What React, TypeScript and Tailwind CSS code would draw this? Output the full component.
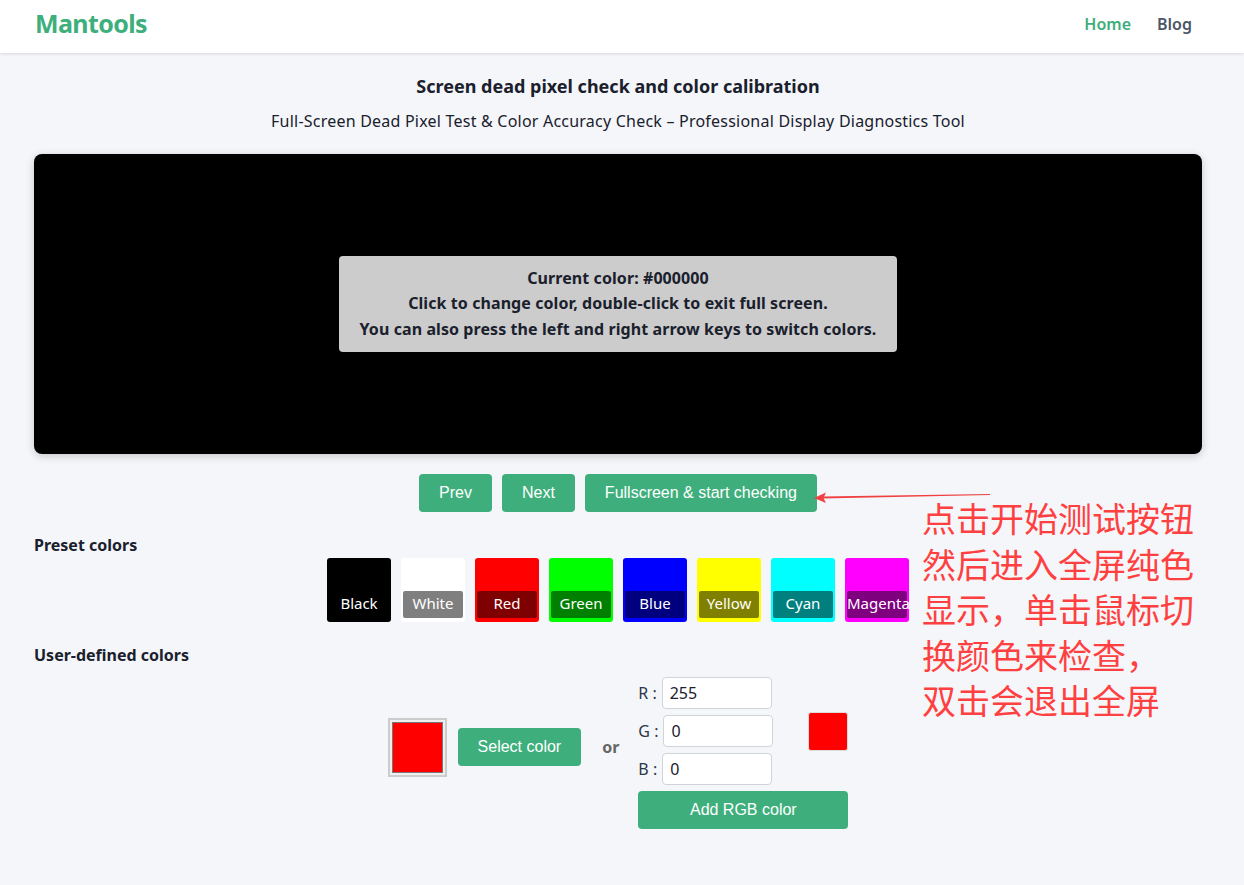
import { useState } from "react";

const PRESETS = [
  { name: "Black", hex: "#000000" },
  { name: "White", hex: "#ffffff" },
  { name: "Red", hex: "#ff0000" },
  { name: "Green", hex: "#00ff00" },
  { name: "Blue", hex: "#0000ff" },
  { name: "Yellow", hex: "#ffff00" },
  { name: "Cyan", hex: "#00ffff" },
  { name: "Magenta", hex: "#ff00ff" },
];

const UI_FONT = "font-['Noto_Sans',sans-serif]";
const BTN_FONT = "font-['Liberation_Sans',Arial,sans-serif]";

function Header() {
  return (
    <header className="h-[53px] bg-white shadow-[0_1px_3px_rgba(0,0,0,0.12)] flex items-center justify-between pl-[35px] pr-[52px] pb-[6px]">
      <div className="text-[25px] font-bold text-[#3eaf7c] tracking-tight">Mantools</div>
      <nav className="flex gap-[26px] text-[16px] font-semibold">
        <a className="text-[#3eaf7c]">Home</a>
        <a className="text-[#4a5568]">Blog</a>
      </nav>
    </header>
  );
}

function GreenButton({ children, className = "" }: { children: React.ReactNode; className?: string }) {
  return (
    <button
      className={`h-[38px] rounded bg-[#3eaf7c] text-white text-[16px] ${BTN_FONT} px-5 ${className}`}
    >
      {children}
    </button>
  );
}

function RgbField({ label, value }: { label: string; value: string }) {
  return (
    <div className="flex items-center gap-[5px]">
      <span className="text-[16px] text-[#2d3748] whitespace-nowrap">{label} :</span>
      <input
        readOnly
        value={value}
        className="h-[32px] w-[110px] rounded border border-[#cfd4da] bg-white px-[7px] text-[16px] text-[#1a202c]"
      />
    </div>
  );
}

export default function App() {
  const [current] = useState("#000000");

  return (
    <div className={`min-h-[885px] bg-[#f4f6fa] text-[#1a202c] ${UI_FONT} relative`}>
      <Header />

      <main className="ml-[34px] w-[1168px] pt-[22px] pb-10">
        <h1 className="text-center text-[18px] font-bold leading-[22px]">
          Screen dead pixel check and color calibration
        </h1>
        <p className="text-center text-[16px] mt-[13px] leading-[22px] tracking-[0.22px]">
          Full-Screen Dead Pixel Test &amp; Color Accuracy Check – Professional Display Diagnostics Tool
        </p>

        {/* Preview screen */}
        <div className="mt-[22px] h-[300px] rounded-lg bg-black shadow-[0_2px_8px_rgba(0,0,0,0.2)] flex items-center justify-center">
          <div className="w-[558px] h-[96px] rounded bg-[#cccccc] flex flex-col items-center justify-center text-[16px] font-bold leading-[25.5px] text-[#1a202c] tracking-[0.08px]">
            <div>Current color: {current}</div>
            <div>Click to change color, double-click to exit full screen.</div>
            <div>You can also press the left and right arrow keys to switch colors.</div>
          </div>
        </div>

        <div className="mt-[20px] flex justify-center gap-[10px]">
          <GreenButton>Prev</GreenButton>
          <GreenButton>Next</GreenButton>
          <GreenButton>Fullscreen &amp; start checking</GreenButton>
        </div>

        <h2 className="mt-[22px] text-[16px] font-bold leading-[22px]">Preset colors</h2>
        <div className="mt-[2px] flex justify-center gap-[10px]">
          {PRESETS.map((c) => (
            <div
              key={c.name}
              className="w-[64px] h-[64px] rounded-[3px] flex flex-col justify-end px-[2px] pb-[4px]"
              style={{ backgroundColor: c.hex }}
            >
              <div className="h-[27px] rounded-[2px] bg-black/50 text-white text-[15px] leading-[25px] text-center whitespace-nowrap">
                {c.name}
              </div>
            </div>
          ))}
        </div>

        <h2 className="mt-[22px] text-[16px] font-bold leading-[22px]">User-defined colors</h2>
        <div className="mt-[11px] flex justify-center items-center gap-[10px]">
          <div className="flex items-center mb-[12px]">
            <div className="w-[59px] h-[59px] border-2 border-[#cccccc] bg-[#efefef] p-[2px]">
              <div className="w-full h-full bg-[#ff0000] border border-[#777]" />
            </div>
            <GreenButton className="ml-[11px]">Select color</GreenButton>
            <span className="ml-[21px] mr-[9px] text-[16px] font-bold text-[#666]">or</span>
          </div>
          <div className="flex flex-col gap-[6px]">
            <div className="flex items-center gap-[35px]">
              <div className="flex flex-col gap-[6px]">
                <RgbField label="R" value="255" />
                <RgbField label="G" value="0" />
                <RgbField label="B" value="0" />
              </div>
              <div className="w-[40px] h-[39px] rounded-[3px] bg-[#ff0000] border border-[#ddd]" />
            </div>
            <GreenButton className="w-[210px]">Add RGB color</GreenButton>
          </div>
        </div>
      </main>

      {/* Annotation overlay */}
      <svg className="absolute left-[810px] top-[488px]" width="185" height="18" viewBox="0 0 185 18">
        <path d="M180 6 L12 8.5 L12 10.5 L180 7 Z" fill="#f04040" />
        <path d="M4 10 L16 4.5 L13.5 10 L16 15 Z" fill="#f04040" />
      </svg>
      <div className="absolute left-[922px] top-[495px] text-[34px] leading-[45.5px] text-[#ff4040] font-['Noto_Sans_CJK_SC',sans-serif]">
        <div>点击开始测试按钮</div>
        <div>然后进入全屏纯色</div>
        <div>显示，单击鼠标切</div>
        <div>换颜色来检查，</div>
        <div>双击会退出全屏</div>
      </div>
    </div>
  );
}
